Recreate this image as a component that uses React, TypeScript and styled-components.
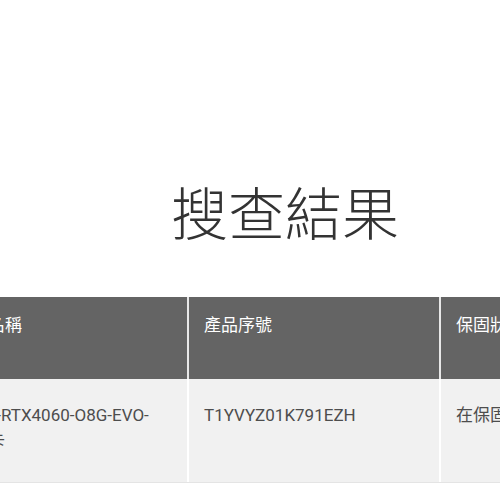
import React from "react";
import styled, { createGlobalStyle } from "styled-components";

const Global = createGlobalStyle`
  html, body { margin: 0; padding: 0; background: #ffffff; }
  body { overflow: hidden; width: 500px; height: 500px; }
`;

const Page = styled.div`
  width: 692px;
  margin-left: -61px;
  padding-top: 181px;
  font-family: Roboto, "Noto Sans CJK TC", sans-serif;
`;

const Title = styled.h1`
  margin: 0;
  text-align: center;
  font-family: "Noto Sans CJK TC", sans-serif;
  font-weight: 300;
  font-size: 57px;
  line-height: 58px;
  color: #333333;
`;

const Table = styled.div`
  margin-top: 58px;
  display: grid;
  grid-template-columns: 250px 252px 1fr;
  border-bottom: 1px solid #e4e4e4;
`;

const HeadCell = styled.div<{ $last?: boolean }>`
  background: #646464;
  color: #ffffff;
  height: 82px;
  box-sizing: border-box;
  padding: 15px 15px 0;
  font-size: 17px;
  line-height: 26px;
  border-right: ${(p) => (p.$last ? "none" : "2px solid #e8e8e8")};
  white-space: nowrap;
  overflow: hidden;
`;

const BodyCell = styled.div<{ $last?: boolean }>`
  background: #f1f1f1;
  color: #4d4d4d;
  height: 103px;
  box-sizing: border-box;
  padding: 23px 15px 0;
  font-size: 17px;
  line-height: 26px;
  border-right: ${(p) => (p.$last ? "none" : "2px solid #ffffff")};
  word-break: keep-all;
`;

const headers = ["產品名稱", "產品序號", "保固狀態"];
const row = ["DUAL-RTX4060-O8G-EVO-顯示卡", "T1YVYZ01K791EZH", "在保固期內"];

export default function App() {
  return (
    <>
      <Global />
      <Page>
        <Title>搜查結果</Title>
        <Table>
          {headers.map((h, i) => (
            <HeadCell key={h} $last={i === headers.length - 1}>
              {h}
            </HeadCell>
          ))}
          {row.map((c, i) => (
            <BodyCell key={c} $last={i === row.length - 1}>
              {c}
            </BodyCell>
          ))}
        </Table>
      </Page>
    </>
  );
}
